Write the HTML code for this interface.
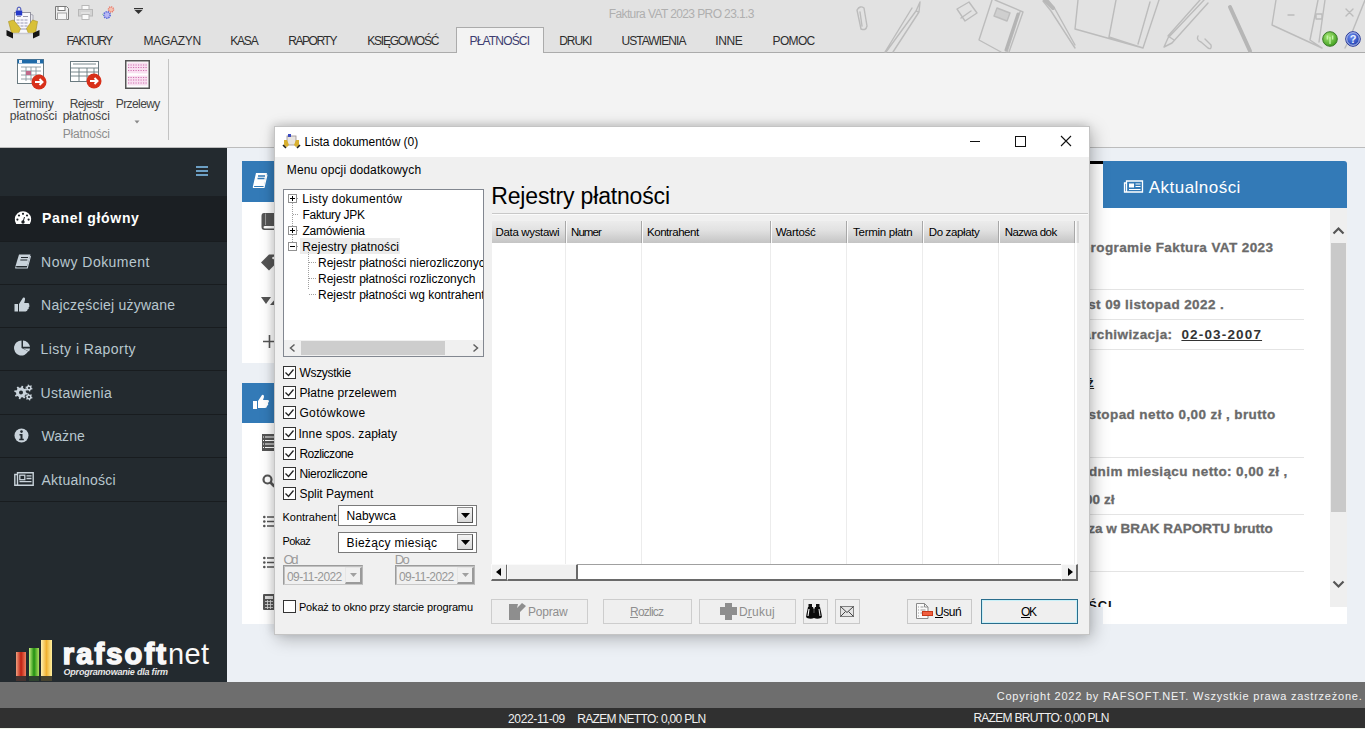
<!DOCTYPE html><html><head><meta charset="utf-8"><style>
*{margin:0;padding:0;box-sizing:border-box}
html,body{width:1365px;height:729px;overflow:hidden;position:relative;background:#ecf0f5;font-family:"Liberation Sans",sans-serif}
.a{position:absolute}
.t{position:absolute;white-space:nowrap;line-height:1}
svg.s{position:absolute;overflow:visible}
</style></head><body>
<div class="a" style="left:0;top:0;width:1365px;height:53px;background:#e2e2e2;border-bottom:1px solid #ababab"></div>
<svg class="s" style="left:0;top:0" width="1365" height="52" viewBox="0 0 1365 52" fill="none" stroke="#bcbcbc" stroke-width="1.4" stroke-linecap="round" stroke-linejoin="round">
<path d="M857 10 q3 -5 7 -2 l3 18 q-1 5 -6 3 z M860 12 l2 14"/>
<path d="M920 2 l-4 9 l-30 41 M920 2 l-1 10 l-26 40 M916 11 l3 1 M912 8 l-27 44" />
<path d="M957 9 l12 -7 l8 11 l-12 8 z M961 18 l10 -7"/>
<path d="M992 0 l-13 40 l22 12 M995 0 l28 12 l-14 40 M1020 12 l-13 40" />
<path d="M1018 14 l-12 36" stroke="#b4b4b4" stroke-width="3"/>
<path d="M997 8 l13 5 l-3 8 l-13 -5 z" fill="#cfcfcf" stroke="#bdbdbd"/>
<path d="M1043 1 l8 10 l22 34 l2 3 M1048 0 l7 9 l20 36" />
<path d="M1045 0 l8 8" stroke="#b8b8b8" stroke-width="4"/>
<path d="M1078 0 l-3 29 l68 19 l16 -48 M1116 0 l-7 37 l34 11 M1150 2 l-12 42" />
<path d="M1204 0 l-36 38 l-4 9 l8 -4 l36 -40 M1200 0 l-32 36 l6 4" />
<path d="M1198 36 q-2 4 3 6 l7 6 q4 2 3 -3 l-6 -6" />
<path d="M1230 7 l20 44" stroke="#b6b6b6" stroke-width="4"/>
<path d="M1276 0 l-4 25 l50 23 M1318 0 l-8 40 l12 8 M1288 15 h6 M1316 14 h6 v5 h-6 z" />
<path d="M1325 0 l-6 42 M1365 0 l-16 40 l-4 8" />
<path d="M1346 9 l7 7 M1353 9 l-7 7" />
</svg>
<svg class="s" style="left:0;top:0" width="45" height="45" viewBox="0 0 45 45">
<path d="M29 14 l4 1 v16 l-4 1 z" fill="#e8e8ee" stroke="#9a9aa8" stroke-width=".8"/>
<rect x="14.5" y="12.5" width="16" height="21" fill="#f8f8fc" stroke="#8a8a98" stroke-width=".9"/>
<path d="M17 16.5 h4 M23 16.5 h5" stroke="#8a8aa0" stroke-width=".9"/>
<g fill="#c8c8d8"><rect x="16.5" y="19" width="3" height="2"/><rect x="20.5" y="19" width="3" height="2"/><rect x="24.5" y="19" width="3" height="2"/>
<rect x="16.5" y="22" width="3" height="2"/><rect x="20.5" y="22" width="3" height="2"/><rect x="24.5" y="22" width="3" height="2"/>
<rect x="16.5" y="25" width="3" height="2"/><rect x="20.5" y="25" width="3" height="2"/><rect x="24.5" y="25" width="3" height="2"/>
<rect x="16.5" y="28" width="11" height="2"/></g>
<rect x="15.8" y="10.5" width="6.4" height="5" fill="#2438c8"/><path d="M17.2 10.5 v-1.6 a1.8 1.8 0 0 1 3.6 0 v1.6" fill="none" stroke="#3a48b8" stroke-width="1"/>
<path d="M8.5 21.5 l5 -1.5 l7 8.5 l-2 5 l-7 -0.5 z" fill="#d8c038" stroke="#a89020" stroke-width=".6"/>
<path d="M37.5 21.5 l-5 -1.5 l-6 8.5 l2 5 l7 -0.5 z" fill="#d8c038" stroke="#a89020" stroke-width=".6"/>
<path d="M6.5 30 l6.5 3 v5.5 l-6.5 -3 z" fill="#151515"/>
<path d="M39.5 30 l-6.5 3 v5.5 l6.5 -3 z" fill="#151515"/>
<path d="M13 33.5 h20" stroke="#c8c8d0" stroke-width="1.5"/>
</svg>
<svg class="s" style="left:55px;top:6px" width="14" height="14" viewBox="0 0 14 14">
<path d="M0.5 0.5 h11 l2 2 v11 h-13 z" fill="#eee" stroke="#7a7a7a"/>
<rect x="3" y="0.5" width="7" height="4" fill="#fff" stroke="#7a7a7a"/>
<rect x="2.5" y="7" width="9" height="6.5" fill="#f5f5f5" stroke="#a5a5a5"/>
</svg>
<svg class="s" style="left:78px;top:5px" width="15" height="15" viewBox="0 0 15 15">
<rect x="4" y="0.5" width="7" height="4" fill="#fafafa" stroke="#b8b8b8"/>
<rect x="0.5" y="4.5" width="14" height="6.5" fill="#d4d4d4" stroke="#b8b8b8"/>
<path d="M3 8 h9" stroke="#eee"/>
<rect x="4" y="9.5" width="7" height="5" fill="#fafafa" stroke="#b8b8b8"/>
</svg>
<svg class="s" style="left:101px;top:5px" width="15" height="15" viewBox="0 0 15 15">
<circle cx="10" cy="4.5" r="2.6" fill="#f4c0b0" stroke="#e87a6a" stroke-width="1.4" stroke-dasharray="1.2 .8"/>
<circle cx="6" cy="10" r="3.2" fill="#b8b8f4" stroke="#5a6ad8" stroke-width="1.6" stroke-dasharray="1.3 .9"/>
<path d="M1 9 l1.5 1" stroke="#90d0a0"/>
</svg>
<svg class="s" style="left:134px;top:8px" width="9" height="6" viewBox="0 0 9 6"><rect x="0" y="0" width="9" height="1.2" fill="#333"/><path d="M0.5 2 h8 l-4 4 z" fill="#333"/></svg>
<div class="t" style="left:608.70px;top:7.84px;font-size:12px;color:#afafaf;letter-spacing:-0.602px;">Faktura VAT 2023 PRO 23.1.3</div>
<div class="a" style="left:456px;top:27px;width:88px;height:27px;background:#f3f3f3;border:1px solid #ababab;border-bottom:none"></div>
<div class="t" style="left:66.60px;top:34.84px;font-size:12px;color:#2e2e2e;letter-spacing:-1.404px;">FAKTURY</div>
<div class="t" style="left:143.50px;top:34.84px;font-size:12px;color:#2e2e2e;letter-spacing:-0.295px;">MAGAZYN</div>
<div class="t" style="left:230.20px;top:34.84px;font-size:12px;color:#2e2e2e;letter-spacing:-1.171px;">KASA</div>
<div class="t" style="left:288.20px;top:34.84px;font-size:12px;color:#2e2e2e;letter-spacing:-1.431px;">RAPORTY</div>
<div class="t" style="left:367.30px;top:34.84px;font-size:12px;color:#2e2e2e;letter-spacing:-1.253px;">KSIĘGOWOŚĆ</div>
<div class="t" style="left:469.50px;top:34.84px;font-size:12px;color:#3d3d70;letter-spacing:-0.824px;">PŁATNOŚCI</div>
<div class="t" style="left:559.20px;top:34.84px;font-size:12px;color:#2e2e2e;letter-spacing:-1.050px;">DRUKI</div>
<div class="t" style="left:621.40px;top:34.84px;font-size:12px;color:#2e2e2e;letter-spacing:-0.926px;">USTAWIENIA</div>
<div class="t" style="left:715.20px;top:34.84px;font-size:12px;color:#2e2e2e;letter-spacing:-0.355px;">INNE</div>
<div class="t" style="left:772.60px;top:34.84px;font-size:12px;color:#2e2e2e;letter-spacing:-0.667px;">POMOC</div>
<svg class="s" style="left:1320px;top:29px" width="44" height="20" viewBox="0 0 44 20">
<defs><radialGradient id="gg" cx="40%" cy="35%" r="70%"><stop offset="0" stop-color="#a8e878"/><stop offset="1" stop-color="#3a9a1a"/></radialGradient>
<radialGradient id="bg2" cx="40%" cy="35%" r="70%"><stop offset="0" stop-color="#6a8af0"/><stop offset="1" stop-color="#1a3aa8"/></radialGradient></defs>
<circle cx="10" cy="10" r="7.3" fill="url(#gg)" stroke="#3a7a2a" stroke-width="1"/>
<path d="M10 8 v7 M7.3 6.5 v4 M12.7 6.5 v4" stroke="#c8f8b0" stroke-width="1.2"/>
<circle cx="33" cy="10" r="7.3" fill="url(#bg2)" stroke="#2a3a98" stroke-width="1"/>
<circle cx="33" cy="10" r="6.3" fill="none" stroke="#c8d0f0" stroke-width="0.9"/>
<text x="33" y="14.3" font-family="Liberation Sans" font-weight="bold" font-size="11" fill="#e8f0ff" text-anchor="middle">?</text>
</svg>
<div class="a" style="left:0;top:53px;width:1365px;height:95px;background:#f3f3f3;border-bottom:1px solid #bcbcbc"></div>
<svg class="s" style="left:17px;top:59px" width="31" height="31" viewBox="0 0 31 31">
<rect x="0.5" y="0.5" width="26" height="24" fill="#fff" stroke="#6a7a80"/>
<rect x="0.5" y="0.5" width="26" height="4" fill="#1e6aa8"/>
<rect x="2" y="1" width="3" height="3" fill="#e8f0f8"/><rect x="20" y="1" width="3" height="3" fill="#e8f0f8"/>
<path d="M4 12 h20 M4 16 h20 M4 20 h14 M9 8 v14 M14 8 v14 M19 8 v8 M4 8 h20" stroke="#8a9aa0" stroke-width="0.9" fill="none"/>
<rect x="9" y="12" width="5" height="4" fill="#c06a8a"/>
<circle cx="22" cy="23" r="7.5" fill="#d8301a"/>
<path d="M18 23 h7 M22.5 20 l3 3 l-3 3" stroke="#fff" stroke-width="2" fill="none"/>
</svg>
<svg class="s" style="left:70px;top:61px" width="32" height="29" viewBox="0 0 32 29">
<rect x="0.5" y="0.5" width="28" height="20" fill="#fff" stroke="#6a7a80"/>
<path d="M3 3 h23 M1 7 h27 M1 11 h27 M1 15 h27 M9 7 v13 M17 7 v13 M24 7 v13" stroke="#6a7a80" stroke-width="0.9" fill="none"/>
<circle cx="24" cy="20" r="7.5" fill="#d8301a"/>
<path d="M20 20 h7 M24.5 17 l3 3 l-3 3" stroke="#fff" stroke-width="2" fill="none"/>
</svg>
<svg class="s" style="left:125px;top:60px" width="26" height="30" viewBox="0 0 26 30">
<rect x="0.75" y="0.75" width="23.5" height="27.5" fill="#fff" stroke="#555" stroke-width="1.5"/>
<rect x="2.5" y="2.5" width="20" height="11" fill="#f8dff0"/>
<rect x="2.5" y="15.5" width="20" height="10" fill="#f8dff0"/>
<rect x="2.5" y="13.5" width="10" height="2" fill="#fff"/>
<path d="M3 5 h19 M3 7.5 h19 M3 10.5 h19 M3 17.5 h19 M3 20 h19 M3 23 h19" stroke="#d070b0" stroke-width="1" stroke-dasharray="1.2 1.3"/>
</svg>
<div class="t" style="left:13.00px;top:97.74px;font-size:12px;color:#444;letter-spacing:-0.218px;">Terminy</div>
<div class="t" style="left:9.70px;top:110.04px;font-size:12px;color:#444;letter-spacing:0.026px;">płatności</div>
<div class="t" style="left:69.70px;top:97.74px;font-size:12px;color:#444;letter-spacing:-0.619px;">Rejestr</div>
<div class="t" style="left:62.70px;top:110.04px;font-size:12px;color:#444;letter-spacing:-0.012px;">płatności</div>
<div class="t" style="left:115.80px;top:97.74px;font-size:12px;color:#444;letter-spacing:-0.597px;">Przelewy</div>
<div class="t" style="left:62.70px;top:128.44px;font-size:12px;color:#8d8d8d;letter-spacing:-0.178px;">Płatności</div>
<svg class="s" style="left:134px;top:120px" width="6" height="4" viewBox="0 0 6 4"><path d="M0.5 0.5 h5 l-2.5 3 z" fill="#888"/></svg>
<div class="a" style="left:168px;top:59px;width:1px;height:81px;background:#c3c3c3"></div>
<div class="a" style="left:0;top:148px;width:227px;height:534px;background:#232a2f"></div>
<div class="a" style="left:0;top:196px;width:227px;height:45px;background:#1b1f23"></div>
<div class="a" style="left:0;top:241px;width:227px;height:1px;background:#181c1f"></div>
<div class="a" style="left:0;top:284px;width:227px;height:1px;background:#181c1f"></div>
<div class="a" style="left:0;top:327px;width:227px;height:1px;background:#181c1f"></div>
<div class="a" style="left:0;top:370px;width:227px;height:1px;background:#181c1f"></div>
<div class="a" style="left:0;top:414px;width:227px;height:1px;background:#181c1f"></div>
<div class="a" style="left:0;top:457px;width:227px;height:1px;background:#181c1f"></div>
<div class="a" style="left:0;top:501px;width:227px;height:1px;background:#181c1f"></div>
<svg class="s" style="left:196px;top:166px" width="12" height="10" viewBox="0 0 12 10"><path d="M0 1 h12 M0 5 h12 M0 9 h12" stroke="#6c9fc4" stroke-width="2"/></svg>
<svg class="s" style="left:14px;top:210px" width="18" height="15" viewBox="0 0 18 15">
<path d="M2.2 14 A8.2 8.2 0 1 1 15.8 14 Z" fill="#fff"/>
<circle cx="9" cy="3.8" r="1.1" fill="#1b1f23"/><circle cx="5" cy="5.5" r="1.1" fill="#1b1f23"/><circle cx="13" cy="5.5" r="1.1" fill="#1b1f23"/>
<circle cx="3.4" cy="9.6" r="1.1" fill="#1b1f23"/><circle cx="14.6" cy="9.6" r="1.1" fill="#1b1f23"/>
<path d="M9 12 l1.5 -5" stroke="#1b1f23" stroke-width="1"/><circle cx="9" cy="12" r="1.7" fill="#1b1f23"/>
</svg>
<svg class="s" style="left:15px;top:254px" width="16" height="15" viewBox="0 0 16 15">
<path d="M4 0.5 h11.5 l-3.2 11.5 h-11.8 z" fill="#c9d3db"/>
<path d="M6 3.5 h7 M5.3 6 h7" stroke="#232a2f" stroke-width="1.2"/>
<path d="M0.8 12.5 v1.5 h11.5 l3.2 -12" fill="none" stroke="#c9d3db" stroke-width="1.1"/>
</svg>
<svg class="s" style="left:14px;top:297px" width="16" height="15" viewBox="0 0 16 15">
<rect x="0.5" y="7" width="3.5" height="7.5" fill="#c9d3db"/>
<path d="M5 7 l3.5 -5.5 q0.5 -1.5 1.8 -1 q1.2 0.6 0.6 2.8 l-0.7 2.6 h4 q1.5 0.3 1 2 q1 1.3 -0.5 2.4 q0.6 1.7 -1.2 2.3 q0.2 1.7 -1.8 1.9 h-6.7 z" fill="#c9d3db"/>
</svg>
<svg class="s" style="left:14px;top:340px" width="17" height="16" viewBox="0 0 17 16">
<path d="M7.5 8 V0.5 A7.5 7.5 0 1 0 14.2 11.3 Z" fill="#c9d3db"/>
<path d="M9 0.6 A7.3 7.3 0 0 1 16 6.8 H9 Z" fill="#c9d3db"/>
<path d="M9 8.5 H16 A7.3 7.3 0 0 1 15 11.5 Z" fill="#c9d3db"/>
</svg>
<svg class="s" style="left:14px;top:384px" width="19" height="17" viewBox="0 0 19 17">
<path d="M12.00 8.50 L13.77 9.14 L13.43 10.70 L11.56 10.56 L10.54 12.04 L11.33 13.74 L9.99 14.61 L8.77 13.18 L7.00 13.50 L6.36 15.27 L4.80 14.93 L4.94 13.06 L3.46 12.04 L1.76 12.83 L0.89 11.49 L2.32 10.27 L2.00 8.50 L0.23 7.86 L0.57 6.30 L2.44 6.44 L3.46 4.96 L2.67 3.26 L4.01 2.39 L5.23 3.82 L7.00 3.50 L7.64 1.73 L9.20 2.07 L9.06 3.94 L10.54 4.96 L12.24 4.17 L13.11 5.51 L11.68 6.73 Z M9.00 8.50 A2.0 2.0 0 1 0 5.00 8.50 A2.0 2.0 0 1 0 9.00 8.50 Z" fill="#c9d3db" fill-rule="evenodd"/>
<path d="M17.60 4.00 L18.57 4.45 L18.26 5.53 L17.20 5.39 L16.30 6.25 L16.40 7.32 L15.30 7.59 L14.89 6.60 L13.70 6.25 L12.82 6.87 L12.04 6.05 L12.70 5.20 L12.40 4.00 L11.43 3.55 L11.74 2.47 L12.80 2.61 L13.70 1.75 L13.60 0.68 L14.70 0.41 L15.11 1.40 L16.30 1.75 L17.18 1.13 L17.96 1.95 L17.30 2.80 Z M16.10 4.00 A1.1 1.1 0 1 0 13.90 4.00 A1.1 1.1 0 1 0 16.10 4.00 Z" fill="#c9d3db" fill-rule="evenodd"/>
<path d="M17.60 13.00 L18.57 13.45 L18.26 14.53 L17.20 14.39 L16.30 15.25 L16.40 16.32 L15.30 16.59 L14.89 15.60 L13.70 15.25 L12.82 15.87 L12.04 15.05 L12.70 14.20 L12.40 13.00 L11.43 12.55 L11.74 11.47 L12.80 11.61 L13.70 10.75 L13.60 9.68 L14.70 9.41 L15.11 10.40 L16.30 10.75 L17.18 10.13 L17.96 10.95 L17.30 11.80 Z M16.10 13.00 A1.1 1.1 0 1 0 13.90 13.00 A1.1 1.1 0 1 0 16.10 13.00 Z" fill="#c9d3db" fill-rule="evenodd"/>
</svg>
<svg class="s" style="left:14px;top:428px" width="15" height="15" viewBox="0 0 15 15">
<circle cx="7.5" cy="7.5" r="7" fill="#c9d3db"/>
<circle cx="7.5" cy="3.6" r="1.3" fill="#232a2f"/>
<path d="M5.5 6 h3 v4.8 h1.3 v1.4 h-4.6 v-1.4 h1.3 v-3.4 h-1 z" fill="#232a2f"/>
</svg>
<svg class="s" style="left:14px;top:472px" width="20" height="14" viewBox="0 0 20 14">
<path d="M3.5 0.8 h15.7 v12.4 h-15.7 z M3.5 2.5 h-2.7 v10.7 h2.7" fill="none" stroke="#c9d3db" stroke-width="1.4"/>
<rect x="5.8" y="3.2" width="5" height="4.5" fill="none" stroke="#c9d3db" stroke-width="1.3"/>
<path d="M12.5 3.8 h5 M12.5 6.5 h5 M5.5 9.6 h12" stroke="#c9d3db" stroke-width="1.3"/>
</svg>
<div class="t" style="left:42.10px;top:210.85px;font-size:14px;color:#fff;font-weight:bold;letter-spacing:0.666px;">Panel główny</div>
<div class="t" style="left:41.10px;top:254.75px;font-size:14px;color:#b8c7ce;letter-spacing:0.466px;">Nowy Dokument</div>
<div class="t" style="left:41.10px;top:298.35px;font-size:14px;color:#b8c7ce;letter-spacing:0.225px;">Najczęściej używane</div>
<div class="t" style="left:40.50px;top:342.35px;font-size:14px;color:#b8c7ce;letter-spacing:0.450px;">Listy i Raporty</div>
<div class="t" style="left:40.50px;top:386.15px;font-size:14px;color:#b8c7ce;letter-spacing:0.301px;">Ustawienia</div>
<div class="t" style="left:41.50px;top:429.15px;font-size:14px;color:#b8c7ce;letter-spacing:0.058px;">Ważne</div>
<div class="t" style="left:41.50px;top:473.15px;font-size:14px;color:#b8c7ce;letter-spacing:0.252px;">Aktualności</div>
<svg class="s" style="left:14px;top:638px" width="42" height="44" viewBox="0 0 42 44">
<defs>
<linearGradient id="lr" x1="0" x2="1"><stop offset="0" stop-color="#f0a080"/><stop offset=".5" stop-color="#c02010"/><stop offset="1" stop-color="#f08060"/></linearGradient>
<linearGradient id="lg" x1="0" x2="1"><stop offset="0" stop-color="#c8f080"/><stop offset=".5" stop-color="#209010"/><stop offset="1" stop-color="#b0e060"/></linearGradient>
<linearGradient id="ly" x1="0" x2="1"><stop offset="0" stop-color="#fff0b0"/><stop offset=".5" stop-color="#f0b030"/><stop offset="1" stop-color="#fff0a0"/></linearGradient>
</defs>
<rect x="2" y="14" width="10" height="24" fill="url(#lr)"/>
<rect x="15" y="10" width="10" height="28" fill="url(#lg)"/>
<rect x="27" y="2" width="11" height="36" fill="url(#ly)"/>
<rect x="2" y="38" width="10" height="5" fill="#6a3a30" opacity=".5"/>
<rect x="15" y="38" width="10" height="5" fill="#3a5a30" opacity=".5"/>
<rect x="27" y="38" width="11" height="5" fill="#6a5a30" opacity=".5"/>
</svg>
<div class="t" style="left:62.80px;top:639.95px;font-size:29px;color:#f8f8f8;font-weight:bold;letter-spacing:2.155px;-webkit-text-stroke:1.6px #f8f8f8;">rafsoft</div>
<div class="t" style="left:168.00px;top:639.95px;font-size:29px;color:#f8f8f8;letter-spacing:0.372px;">net</div>
<div class="t" style="left:63.50px;top:667.68px;font-size:9px;color:#e8e8e8;font-weight:bold;font-style:italic;letter-spacing:-0.205px;">Oprogramowanie dla firm</div>
<div class="a" style="left:242px;top:161px;width:50px;height:41px;background:#337ab7"></div>
<div class="a" style="left:242px;top:202px;width:50px;height:161px;background:#fff"></div>
<div class="a" style="left:242px;top:383px;width:50px;height:40px;background:#337ab7"></div>
<div class="a" style="left:242px;top:423px;width:50px;height:201px;background:#fff"></div>
<svg class="s" style="left:252px;top:172px" width="17" height="17" viewBox="0 0 17 17">
<path d="M4 1 h11 l-3 13 h-11 z" fill="#fff"/>
<path d="M6 4 h7 M5.5 6.5 h7" stroke="#337ab7" stroke-width="1.3"/>
<path d="M1.5 14 l0 1.5 h10.5 l3 -13" fill="none" stroke="#fff" stroke-width="1.2"/>
</svg>
<svg class="s" style="left:252px;top:393px" width="18" height="18" viewBox="0 0 18 18">
<rect x="1" y="8" width="4" height="8" fill="#fff"/>
<path d="M6 8 l4 -6 q2 -1 2 2 l-1 3 h5 q2 1 0 3 q1 2 -1 3 q0 2 -2 2 h-7 z" fill="#fff"/>
</svg>
<svg class="s" style="left:261px;top:213px" width="16" height="17" viewBox="0 0 16 17"><path d="M3 0 h13 v13 h-12 q-1.5 0 -1.5 1.2 q0 1.3 1.5 1.3 h12 v1.5 h-12.5 q-3 0 -3 -3 v-11 q0 -3 2.5 -3 z" fill="#555"/><path d="M4.5 0.5 v11.5" stroke="#999" stroke-width="1"/></svg>
<svg class="s" style="left:261px;top:254px" width="16" height="17" viewBox="0 0 16 17"><path d="M0 8.5 l8 -8 h8 v8 l-8 8 z" fill="#555"/><circle cx="12.5" cy="4" r="1.3" fill="#fff"/></svg>
<svg class="s" style="left:261px;top:296px" width="16" height="10" viewBox="0 0 16 10"><path d="M0 1 h10 l-5 7 z M9 9 l7 -8 v8 z" fill="#555"/></svg>
<svg class="s" style="left:263px;top:335px" width="13" height="13" viewBox="0 0 13 13"><path d="M6.5 0 v13 M0 6.5 h13" stroke="#555" stroke-width="1.6"/></svg>
<svg class="s" style="left:262px;top:434px" width="14" height="17" viewBox="0 0 14 17"><rect x="0" y="0" width="14" height="17" fill="#555"/><path d="M3 3 h10 M3 6.5 h10 M3 10 h10 M3 13.5 h10" stroke="#fff" stroke-width="1.2"/><path d="M1 3 h1 M1 6.5 h1 M1 10 h1 M1 13.5 h1" stroke="#fff" stroke-width="1"/></svg>
<svg class="s" style="left:262px;top:474px" width="14" height="14" viewBox="0 0 14 14"><circle cx="5.5" cy="5.5" r="4" fill="none" stroke="#555" stroke-width="2.2"/><path d="M8.5 8.5 l4 4" stroke="#555" stroke-width="2.6"/></svg>
<svg class="s" style="left:263px;top:515px" width="13" height="13" viewBox="0 0 13 13"><path d="M4 2 h9 M4 6.5 h9 M4 11 h9" stroke="#555" stroke-width="1.6"/><circle cx="1.3" cy="2" r="1.3" fill="#555"/><circle cx="1.3" cy="6.5" r="1.3" fill="#555"/><circle cx="1.3" cy="11" r="1.3" fill="#555"/></svg>
<svg class="s" style="left:263px;top:556px" width="13" height="13" viewBox="0 0 13 13"><path d="M4 2 h9 M4 6.5 h9 M4 11 h9" stroke="#555" stroke-width="1.6"/><circle cx="1.3" cy="2" r="1.3" fill="#555"/><circle cx="1.3" cy="6.5" r="1.3" fill="#555"/><circle cx="1.3" cy="11" r="1.3" fill="#555"/></svg>
<svg class="s" style="left:263px;top:594px" width="12" height="16" viewBox="0 0 12 16"><rect x="0" y="0" width="12" height="16" rx="1" fill="#555"/><rect x="2" y="2" width="8" height="3" fill="#ddd"/><path d="M2 7.5 h8 M2 10.5 h8 M2 13.5 h8 M4.5 6 v9 M7.5 6 v9" stroke="#ddd" stroke-width="0.8"/></svg>
<div class="a" style="left:1040px;top:208px;width:307px;height:399px;background:#fff"></div>
<div class="a" style="left:1103px;top:607px;width:244px;height:17px;background:#fff"></div>
<div class="a" style="left:1330px;top:208px;width:17px;height:399px;background:#efefef"></div>
<div class="a" style="left:1103px;top:161px;width:244px;height:47px;background:#337ab7;border-top-right-radius:3px"></div>
<div class="a" style="left:1040px;top:161px;width:63px;height:47px;background:#fff;border-top:3px solid #000"></div>
<svg class="s" style="left:1124px;top:180px" width="19" height="13" viewBox="0 0 19 13">
<path d="M2.5 1 h16 v11 h-16 z M2.5 3 h-2 v9 h2" fill="none" stroke="#fff" stroke-width="1.3"/>
<rect x="5" y="3.5" width="5" height="4" fill="#fff"/>
<path d="M11.5 4 h5 M11.5 6.5 h5 M5 9.5 h11.5" stroke="#fff" stroke-width="1.2"/>
</svg>
<div class="t" style="left:1148.80px;top:179.11px;font-size:17px;color:#fff;letter-spacing:0.464px;">Aktualności</div>
<div class="t" style="left:1012.45px;top:241.27px;font-size:13.5px;color:#6a6a6a;font-weight:bold;letter-spacing:0.400px;-webkit-text-stroke:0.3px #6a6a6a;">Witamy w programie Faktura VAT 2023</div>
<div class="t" style="left:1042.63px;top:297.67px;font-size:13.5px;color:#6a6a6a;font-weight:bold;letter-spacing:0.400px;-webkit-text-stroke:0.3px #6a6a6a;">Dziś jest 09 listopad 2022 .</div>
<div class="t" style="left:1021.89px;top:327.97px;font-size:13.5px;color:#6a6a6a;font-weight:bold;letter-spacing:0.400px;-webkit-text-stroke:0.3px #6a6a6a;">Ostatnia archiwizacja: </div>
<div class="t" style="left:1181.41px;top:327.97px;font-size:13.5px;color:#333;font-weight:bold;letter-spacing:1.160px;text-decoration:underline;">02-03-2007</div>
<div class="t" style="left:1031.68px;top:375.77px;font-size:13.5px;color:#222;font-weight:bold;letter-spacing:0.400px;text-decoration:underline;">Sprzedaż</div>
<div class="t" style="left:998.57px;top:407.77px;font-size:13.5px;color:#6a6a6a;font-weight:bold;letter-spacing:0.400px;-webkit-text-stroke:0.3px #6a6a6a;">Sprzedaż w listopad netto 0,00 zł , brutto</div>
<div class="t" style="left:960.63px;top:464.57px;font-size:13.5px;color:#6a6a6a;font-weight:bold;letter-spacing:0.400px;-webkit-text-stroke:0.3px #6a6a6a;">Sprzedaż w poprzednim miesiącu netto: 0,00 zł ,</div>
<div class="t" style="left:1029.99px;top:493.27px;font-size:13.5px;color:#6a6a6a;font-weight:bold;letter-spacing:0.100px;-webkit-text-stroke:0.3px #6a6a6a;">brutto 0,00 zł</div>
<div class="t" style="left:1025.34px;top:522.47px;font-size:13.5px;color:#6a6a6a;font-weight:bold;-webkit-text-stroke:0.3px #6a6a6a;">Sprzedaż za w BRAK RAPORTU brutto</div>
<div class="a" style="left:1040px;top:289.0px;width:264px;height:1px;background:#e4e4e4"></div>
<div class="a" style="left:1040px;top:319.0px;width:264px;height:1px;background:#e4e4e4"></div>
<div class="a" style="left:1040px;top:348.7px;width:264px;height:1px;background:#e4e4e4"></div>
<div class="a" style="left:1040px;top:456.9px;width:264px;height:1px;background:#e4e4e4"></div>
<div class="a" style="left:1040px;top:514.1px;width:264px;height:1px;background:#e4e4e4"></div>
<div class="a" style="left:1040px;top:570.5px;width:264px;height:1px;background:#e4e4e4"></div>
<div class="a" style="left:1040px;top:590px;width:100px;height:16.8px;overflow:hidden"><div class="t" style="left:-23.07px;top:9.10px;font-size:13px;color:#111;font-weight:bold;letter-spacing:0.800px;">WIADOMOŚCI</div></div>
<div class="a" style="left:1331px;top:243px;width:15px;height:269px;background:#c9c9c9"></div>
<svg class="s" style="left:1332px;top:226px" width="13" height="9" viewBox="0 0 13 9"><path d="M1.5 7.5 l5 -5 l5 5" fill="none" stroke="#555" stroke-width="2.2"/></svg>
<svg class="s" style="left:1332px;top:580px" width="13" height="9" viewBox="0 0 13 9"><path d="M1.5 1.5 l5 5 l5 -5" fill="none" stroke="#555" stroke-width="2.2"/></svg>
<div class="a" style="left:274px;top:126px;width:816px;height:509px;background:#f0f0f0;border:1px solid #c4c4c4;box-shadow:3px 4px 16px rgba(0,0,0,.26), -2px -2px 8px rgba(0,0,0,.12)"></div>
<div class="a" style="left:275px;top:127px;width:814px;height:30px;background:#fff"></div>
<svg class="s" style="left:283px;top:133px" width="17" height="16" viewBox="0 0 17 16">
<rect x="4" y="3" width="9" height="9" fill="#e8e4e0" stroke="#9a9090" stroke-width=".8"/>
<rect x="5" y="1" width="3" height="3" fill="#3a4ac0"/>
<path d="M1 7 l3 0 l2 5 l-2 2 l-3 -1 z" fill="#d8b030"/><path d="M16 7 l-3 0 l-2 5 l2 2 l3 -1 z" fill="#d8b030"/>
<path d="M0 12 l3 3 M17 12 l-3 3" stroke="#222" stroke-width="1.6"/>
</svg>
<div class="t" style="left:304.40px;top:135.74px;font-size:12px;color:#000;letter-spacing:-0.049px;">Lista dokumentów (0)</div>
<svg class="s" style="left:970px;top:136px" width="102" height="11" viewBox="0 0 102 11"><path d="M0 5.5 h10" stroke="#111" stroke-width="1"/><rect x="45.5" y="0.5" width="10" height="10" fill="none" stroke="#111"/><path d="M91 0 l10 10 M101 0 l-10 10" stroke="#111" stroke-width="1.1"/></svg>
<div class="t" style="left:286.80px;top:163.54px;font-size:12px;color:#000;letter-spacing:0.136px;">Menu opcji dodatkowych</div>
<div class="a" style="left:283px;top:189px;width:201px;height:168px;background:#fff;border:1px solid #828790"></div>
<div class="a" style="left:300px;top:238px;width:100px;height:16px;background:#ececec"></div>
<svg class="s" style="left:288px;top:194px" width="9" height="9" viewBox="0 0 9 9"><rect x="0.5" y="0.5" width="8" height="8" fill="#fff" stroke="#919191"/><path d="M2 4.5 h5 M4.5 2 v5" stroke="#000" stroke-width="1"/></svg>
<svg class="s" style="left:288px;top:226px" width="9" height="9" viewBox="0 0 9 9"><rect x="0.5" y="0.5" width="8" height="8" fill="#fff" stroke="#919191"/><path d="M2 4.5 h5 M4.5 2 v5" stroke="#000" stroke-width="1"/></svg>
<svg class="s" style="left:288px;top:242px" width="9" height="9" viewBox="0 0 9 9"><rect x="0.5" y="0.5" width="8" height="8" fill="#fff" stroke="#919191"/><path d="M2 4.5 h5" stroke="#000" stroke-width="1"/></svg>
<svg class="s" style="left:288px;top:194px" width="40" height="110" viewBox="0 0 40 110" fill="none" stroke="#a0a0a0" stroke-width="1" stroke-dasharray="1 1">
<path d="M4.5 9 v23 M4.5 41 v7 M9 4.5 h2 M5 20.5 h6 M9 36.5 h2 M9 52.5 h2 M20.5 58 v38 M21 68.5 h7 M21 84.5 h7 M21 100.5 h7"/>
</svg>
<div class="a" style="left:284px;top:190px;width:199px;height:150px;overflow:hidden"><div class="t" style="left:18.30px;top:2.74px;font-size:12px;color:#000;letter-spacing:0.241px;">Listy dokumentów</div><div class="t" style="left:18.50px;top:18.74px;font-size:12px;color:#000;letter-spacing:-0.295px;">Faktury JPK</div><div class="t" style="left:18.50px;top:34.74px;font-size:12px;color:#000;letter-spacing:-0.247px;">Zamówienia</div><div class="t" style="left:18.30px;top:50.74px;font-size:12px;color:#000;letter-spacing:0.115px;">Rejestry płatności</div><div class="t" style="left:34.00px;top:66.74px;font-size:12px;color:#000;letter-spacing:-0.024px;">Rejestr płatności nierozliczonych</div><div class="t" style="left:34.00px;top:82.74px;font-size:12px;color:#000;letter-spacing:-0.024px;">Rejestr płatności rozliczonych</div><div class="t" style="left:34.00px;top:98.74px;font-size:12px;color:#000;letter-spacing:-0.024px;">Rejestr płatności wg kontrahenta</div></div>
<div class="a" style="left:284px;top:340px;width:199px;height:16px;background:#f0f0f0"></div>
<div class="a" style="left:301px;top:341px;width:144px;height:14px;background:#cdcdcd"></div>
<svg class="s" style="left:289px;top:344px" width="8" height="8" viewBox="0 0 8 8"><path d="M5.5 0.5 l-4 3.5 l4 3.5" fill="none" stroke="#606060" stroke-width="1.5"/></svg>
<svg class="s" style="left:472px;top:344px" width="8" height="8" viewBox="0 0 8 8"><path d="M1.5 0.5 l4 3.5 l-4 3.5" fill="none" stroke="#606060" stroke-width="1.5"/></svg>
<svg class="s" style="left:283px;top:366px" width="13" height="13" viewBox="0 0 13 13"><rect x="0.5" y="0.5" width="12" height="12" fill="#fff" stroke="#333"/><path d="M2.5 6.5 l3 3 l5 -6" fill="none" stroke="#222" stroke-width="1.3"/></svg>
<div class="t" style="left:299.40px;top:366.54px;font-size:12px;color:#000;letter-spacing:-0.291px;">Wszystkie</div>
<svg class="s" style="left:283px;top:386px" width="13" height="13" viewBox="0 0 13 13"><rect x="0.5" y="0.5" width="12" height="12" fill="#fff" stroke="#333"/><path d="M2.5 6.5 l3 3 l5 -6" fill="none" stroke="#222" stroke-width="1.3"/></svg>
<div class="t" style="left:299.40px;top:386.54px;font-size:12px;color:#000;letter-spacing:0.108px;">Płatne przelewem</div>
<svg class="s" style="left:283px;top:406px" width="13" height="13" viewBox="0 0 13 13"><rect x="0.5" y="0.5" width="12" height="12" fill="#fff" stroke="#333"/><path d="M2.5 6.5 l3 3 l5 -6" fill="none" stroke="#222" stroke-width="1.3"/></svg>
<div class="t" style="left:299.40px;top:406.54px;font-size:12px;color:#000;letter-spacing:0.372px;">Gotówkowe</div>
<svg class="s" style="left:283px;top:427px" width="13" height="13" viewBox="0 0 13 13"><rect x="0.5" y="0.5" width="12" height="12" fill="#fff" stroke="#333"/><path d="M2.5 6.5 l3 3 l5 -6" fill="none" stroke="#222" stroke-width="1.3"/></svg>
<div class="t" style="left:298.40px;top:427.54px;font-size:12px;color:#000;letter-spacing:0.110px;">Inne spos. zapłaty</div>
<svg class="s" style="left:283px;top:447px" width="13" height="13" viewBox="0 0 13 13"><rect x="0.5" y="0.5" width="12" height="12" fill="#fff" stroke="#333"/><path d="M2.5 6.5 l3 3 l5 -6" fill="none" stroke="#222" stroke-width="1.3"/></svg>
<div class="t" style="left:299.40px;top:447.54px;font-size:12px;color:#000;letter-spacing:-0.491px;">Rozliczone</div>
<svg class="s" style="left:283px;top:467px" width="13" height="13" viewBox="0 0 13 13"><rect x="0.5" y="0.5" width="12" height="12" fill="#fff" stroke="#333"/><path d="M2.5 6.5 l3 3 l5 -6" fill="none" stroke="#222" stroke-width="1.3"/></svg>
<div class="t" style="left:299.40px;top:467.54px;font-size:12px;color:#000;letter-spacing:-0.321px;">Nierozliczone</div>
<svg class="s" style="left:283px;top:487px" width="13" height="13" viewBox="0 0 13 13"><rect x="0.5" y="0.5" width="12" height="12" fill="#fff" stroke="#333"/><path d="M2.5 6.5 l3 3 l5 -6" fill="none" stroke="#222" stroke-width="1.3"/></svg>
<div class="t" style="left:299.40px;top:487.54px;font-size:12px;color:#000;letter-spacing:-0.017px;">Split Payment</div>
<div class="a" style="left:338px;top:505px;width:139px;height:21px;background:#fff;border:1px solid #7a7a7a"></div><div class="a" style="left:457px;top:507px;width:16px;height:16px;background:linear-gradient(#f4f4f4,#d8d8d8);border:1px solid #8a8a8a;border-right-color:#555;border-bottom-color:#555"></div><svg class="s" style="left:461px;top:513px" width="9" height="5" viewBox="0 0 9 5"><path d="M0 0 h9 l-4.5 5 z" fill="#000"/></svg><div class="t" style="left:346.60px;top:509.64px;font-size:12px;color:#000;">Nabywca</div>
<div class="a" style="left:338px;top:532px;width:139px;height:21px;background:#fff;border:1px solid #7a7a7a"></div><div class="a" style="left:457px;top:534px;width:16px;height:16px;background:linear-gradient(#f4f4f4,#d8d8d8);border:1px solid #8a8a8a;border-right-color:#555;border-bottom-color:#555"></div><svg class="s" style="left:461px;top:540px" width="9" height="5" viewBox="0 0 9 5"><path d="M0 0 h9 l-4.5 5 z" fill="#000"/></svg><div class="t" style="left:346.60px;top:536.64px;font-size:12px;color:#000;letter-spacing:0.312px;">Bieżący miesiąc</div>
<div class="t" style="left:282.40px;top:512.39px;font-size:11px;color:#000;letter-spacing:0.026px;">Kontrahent</div>
<div class="t" style="left:282.40px;top:535.69px;font-size:11px;color:#000;letter-spacing:-0.568px;">Pokaż</div>
<div class="t" style="left:283.60px;top:552.50px;font-size:13px;color:#9a9a9a;letter-spacing:-2.412px;">Od</div>
<div class="t" style="left:394.70px;top:552.50px;font-size:13px;color:#9a9a9a;letter-spacing:-1.488px;">Do</div>
<div class="a" style="left:283px;top:565px;width:80px;height:20px;background:#f0f0f0;border:1px solid #9c9c9c;border-right-color:#b8b8b8;border-bottom-color:#c8c8c8"></div><div class="a" style="left:284px;top:566px;width:78px;height:18px;border-top:1px solid #c0c0c0;border-left:1px solid #c0c0c0"></div><div class="a" style="left:345px;top:567px;width:17px;height:17px;background:#f0f0f0;border:1px solid #e6e6e6;border-right:2px solid #9a9a9a;border-bottom:2px solid #9a9a9a"></div><svg class="s" style="left:350px;top:573px" width="7" height="4" viewBox="0 0 7 4"><path d="M0 0 h7 l-3.5 4 z" fill="#a0a0a0"/></svg><div class="t" style="left:287.00px;top:570.64px;font-size:12px;color:#979797;letter-spacing:-0.580px;">09-11-2022</div>
<div class="a" style="left:395px;top:565px;width:80px;height:20px;background:#f0f0f0;border:1px solid #9c9c9c;border-right-color:#b8b8b8;border-bottom-color:#c8c8c8"></div><div class="a" style="left:396px;top:566px;width:78px;height:18px;border-top:1px solid #c0c0c0;border-left:1px solid #c0c0c0"></div><div class="a" style="left:457px;top:567px;width:17px;height:17px;background:#f0f0f0;border:1px solid #e6e6e6;border-right:2px solid #9a9a9a;border-bottom:2px solid #9a9a9a"></div><svg class="s" style="left:462px;top:573px" width="7" height="4" viewBox="0 0 7 4"><path d="M0 0 h7 l-3.5 4 z" fill="#a0a0a0"/></svg><div class="t" style="left:399.00px;top:570.64px;font-size:12px;color:#979797;letter-spacing:-0.580px;">09-11-2022</div>
<svg class="s" style="left:283px;top:600px" width="13" height="13" viewBox="0 0 13 13"><rect x="0.5" y="0.5" width="12" height="12" fill="#fff" stroke="#333"/></svg>
<div class="t" style="left:298.90px;top:601.89px;font-size:11px;color:#000;letter-spacing:-0.148px;">Pokaż to okno przy starcie programu</div>
<div class="t" style="left:491.30px;top:184.53px;font-size:23px;color:#000;letter-spacing:-0.165px;">Rejestry płatności</div>
<div class="a" style="left:492px;top:213px;width:596px;height:1px;background:#c8c8c8"></div>
<div class="a" style="left:492px;top:214px;width:596px;height:1px;background:#fbfbfb"></div>
<div class="a" style="left:492px;top:243px;width:585px;height:321px;background:#fff"></div>
<div class="a" style="left:492px;top:221px;width:584px;height:22px;background:linear-gradient(#ececec,#e2e2e2 40%,#c4c4c4)"></div>
<div class="a" style="left:565px;top:221px;width:1px;height:22px;background:#a8a8a8"></div>
<div class="a" style="left:566px;top:221px;width:1px;height:22px;background:#fafafa"></div>
<div class="a" style="left:565px;top:243px;width:1px;height:321px;background:#ececec"></div>
<div class="a" style="left:641px;top:221px;width:1px;height:22px;background:#a8a8a8"></div>
<div class="a" style="left:642px;top:221px;width:1px;height:22px;background:#fafafa"></div>
<div class="a" style="left:641px;top:243px;width:1px;height:321px;background:#ececec"></div>
<div class="a" style="left:770px;top:221px;width:1px;height:22px;background:#a8a8a8"></div>
<div class="a" style="left:771px;top:221px;width:1px;height:22px;background:#fafafa"></div>
<div class="a" style="left:770px;top:243px;width:1px;height:321px;background:#ececec"></div>
<div class="a" style="left:846px;top:221px;width:1px;height:22px;background:#a8a8a8"></div>
<div class="a" style="left:847px;top:221px;width:1px;height:22px;background:#fafafa"></div>
<div class="a" style="left:846px;top:243px;width:1px;height:321px;background:#ececec"></div>
<div class="a" style="left:922px;top:221px;width:1px;height:22px;background:#a8a8a8"></div>
<div class="a" style="left:923px;top:221px;width:1px;height:22px;background:#fafafa"></div>
<div class="a" style="left:922px;top:243px;width:1px;height:321px;background:#ececec"></div>
<div class="a" style="left:998px;top:221px;width:1px;height:22px;background:#a8a8a8"></div>
<div class="a" style="left:999px;top:221px;width:1px;height:22px;background:#fafafa"></div>
<div class="a" style="left:998px;top:243px;width:1px;height:321px;background:#ececec"></div>
<div class="a" style="left:1074px;top:221px;width:1px;height:22px;background:#a8a8a8"></div>
<div class="a" style="left:1075px;top:221px;width:1px;height:22px;background:#fafafa"></div>
<div class="a" style="left:1074px;top:243px;width:1px;height:321px;background:#ececec"></div>
<div class="a" style="left:1077px;top:221px;width:2px;height:22px;background:#d8d8d8"></div>
<div class="t" style="left:495.50px;top:227.27px;font-size:11.5px;color:#000;letter-spacing:-0.335px;">Data wystawi</div>
<div class="t" style="left:571.00px;top:227.27px;font-size:11.5px;color:#000;letter-spacing:-0.919px;">Numer</div>
<div class="t" style="left:647.00px;top:227.27px;font-size:11.5px;color:#000;letter-spacing:-0.452px;">Kontrahent</div>
<div class="t" style="left:775.70px;top:227.27px;font-size:11.5px;color:#000;letter-spacing:-0.266px;">Wartość</div>
<div class="t" style="left:853.10px;top:227.27px;font-size:11.5px;color:#000;letter-spacing:-0.277px;">Termin płatn</div>
<div class="t" style="left:928.80px;top:227.27px;font-size:11.5px;color:#000;letter-spacing:-0.376px;">Do zapłaty</div>
<div class="t" style="left:1004.70px;top:227.27px;font-size:11.5px;color:#000;letter-spacing:-0.555px;">Nazwa dok</div>
<div class="a" style="left:491px;top:564px;width:587px;height:17px;background:#fff;border-top:1px solid #a0a0a0;border-bottom:2px solid #6a6a6a"></div>
<div class="a" style="left:491px;top:564px;width:17px;height:17px;background:#f0f0f0;border:1px solid #fafafa;border-right:2px solid #6a6a6a;border-bottom:2px solid #6a6a6a"></div>
<div class="a" style="left:507px;top:564px;width:71px;height:17px;background:#f0f0f0;border:1px solid #fafafa;border-right:2px solid #6a6a6a;border-bottom:2px solid #6a6a6a"></div>
<div class="a" style="left:1061px;top:564px;width:17px;height:17px;background:#f0f0f0;border:1px solid #fafafa;border-right:2px solid #6a6a6a;border-bottom:2px solid #6a6a6a"></div>
<svg class="s" style="left:496px;top:568px" width="5" height="8" viewBox="0 0 5 8"><path d="M5 0 v8 l-5 -4 z" fill="#000"/></svg>
<svg class="s" style="left:1068px;top:568px" width="5" height="8" viewBox="0 0 5 8"><path d="M0 0 v8 l5 -4 z" fill="#000"/></svg>
<div class="a" style="left:491px;top:599px;width:97px;height:25px;background:#efefef;border:1px solid #cdcdcd"></div>
<div class="a" style="left:603px;top:599px;width:89px;height:25px;background:#efefef;border:1px solid #cdcdcd"></div>
<div class="a" style="left:699px;top:599px;width:97px;height:25px;background:#efefef;border:1px solid #cdcdcd"></div>
<div class="a" style="left:803px;top:599px;width:25px;height:25px;background:#efefef;border:1px solid #c8c8c8"></div>
<div class="a" style="left:835px;top:599px;width:25px;height:25px;background:#efefef;border:1px solid #c8c8c8"></div>
<div class="a" style="left:907px;top:599px;width:65px;height:25px;background:#efefef;border:1px solid #c8c8c8"></div>
<div class="a" style="left:981px;top:599px;width:97px;height:25px;background:#efefef;border:1px solid #2a6d8c"></div>
<div class="a" style="left:982px;top:600px;width:95px;height:23px;border:1px solid #c8f0f8"></div>
<div class="t" style="left:528.00px;top:605.84px;font-size:12px;color:#8e8e8e;letter-spacing:-0.204px;">Popraw</div>
<div class="t" style="left:630.00px;top:605.84px;font-size:12px;color:#8e8e8e;letter-spacing:-0.779px;">Rozlicz</div>
<div class="a" style="left:630px;top:617px;width:8px;height:1px;background:#8e8e8e"></div>
<div class="a" style="left:747px;top:617px;width:5px;height:1px;background:#8e8e8e"></div>
<div class="a" style="left:935px;top:617px;width:8px;height:1px;background:#000"></div>
<div class="a" style="left:1021px;top:617px;width:9px;height:1px;background:#000"></div>
<div class="t" style="left:739.00px;top:605.84px;font-size:12px;color:#8e8e8e;letter-spacing:0.198px;">Drukuj</div>
<div class="t" style="left:935.00px;top:605.84px;font-size:12px;color:#000;letter-spacing:-0.447px;">Usuń</div>
<div class="t" style="left:1021.00px;top:605.84px;font-size:12px;color:#000;letter-spacing:-1.334px;">OK</div>
<svg class="s" style="left:509px;top:603px" width="17" height="17" viewBox="0 0 17 17"><path d="M0 1 h9 l-1 4 l5 -5 l4 3 l-6 6 v8 h-11 z" fill="#8e8e8e"/></svg>
<svg class="s" style="left:720px;top:603px" width="17" height="17" viewBox="0 0 17 17"><rect x="5" y="0" width="7" height="4" fill="#8e8e8e"/><rect x="0" y="4" width="17" height="8" fill="#8e8e8e"/><rect x="5" y="12" width="7" height="5" fill="#8e8e8e"/></svg>
<svg class="s" style="left:806px;top:604px" width="17" height="15" viewBox="0 0 17 15"><rect x="2.5" y="0" width="3.5" height="3" fill="#111"/><rect x="10" y="0" width="3.5" height="3" fill="#111"/><path d="M2 3 h5 l1 3 v8 q-3 1.5 -7 0 q-1.5 -1 -0.5 -4 z" fill="#0a0a0a"/><path d="M9 3 h5 l1.5 7 q1 3 -0.5 4 q-4 1.5 -7 0 v-8 z" fill="#0a0a0a"/><path d="M7 6 h2 v3 h-2 z" fill="#333"/><path d="M3 5 l-1 7" stroke="#fff" stroke-width="1.1"/><path d="M13 5 l1 7" stroke="#ddd" stroke-width="1.1"/></svg>
<svg class="s" style="left:840px;top:606px" width="14" height="11" viewBox="0 0 14 11"><rect x="0.5" y="0.5" width="13" height="10" fill="#e4e4e4" stroke="#808080"/><path d="M0.5 0.5 l6.5 6 l6.5 -6 M0.5 10.5 l5 -5 M13.5 10.5 l-5 -5" fill="none" stroke="#444" stroke-width="1"/></svg>
<svg class="s" style="left:916px;top:603px" width="17" height="16" viewBox="0 0 17 16"><path d="M0.5 0.5 h8 l3.5 3.5 v11.5 h-11.5 z" fill="#fafafa" stroke="#8a8a8a"/><path d="M8.5 0.5 v3.5 h3.5" fill="none" stroke="#8a8a8a"/><path d="M2 4 h1 M2 7 h1 M2 10 h1 M2 13 h1 M4.5 4 h3 M4.5 7 h5 M4.5 10 h2" stroke="#999" stroke-width="1"/><rect x="6.5" y="8.5" width="10" height="4" fill="#f06040" stroke="#c83818" stroke-width="1"/></svg>
<div class="a" style="left:0;top:682px;width:1365px;height:26px;background:#6e6e6e"></div>
<div class="t" style="left:996.70px;top:690.69px;font-size:11px;color:#f2f2f2;letter-spacing:0.771px;">Copyright 2022 by RAFSOFT.NET. Wszystkie prawa zastrzeżone.</div>
<div class="a" style="left:0;top:708px;width:1365px;height:20px;background:#303030"></div>
<div class="a" style="left:0;top:728px;width:1365px;height:1px;background:#eef2ea"></div>
<div class="t" style="left:508.00px;top:712.64px;font-size:12px;color:#f0f0f0;letter-spacing:-0.358px;">2022-11-09</div>
<div class="t" style="left:577.30px;top:712.64px;font-size:12px;color:#f0f0f0;letter-spacing:-0.681px;">RAZEM NETTO: 0,00 PLN</div>
<div class="t" style="left:973.40px;top:712.44px;font-size:12px;color:#f0f0f0;letter-spacing:-0.718px;">RAZEM BRUTTO: 0,00 PLN</div>
</body></html>
